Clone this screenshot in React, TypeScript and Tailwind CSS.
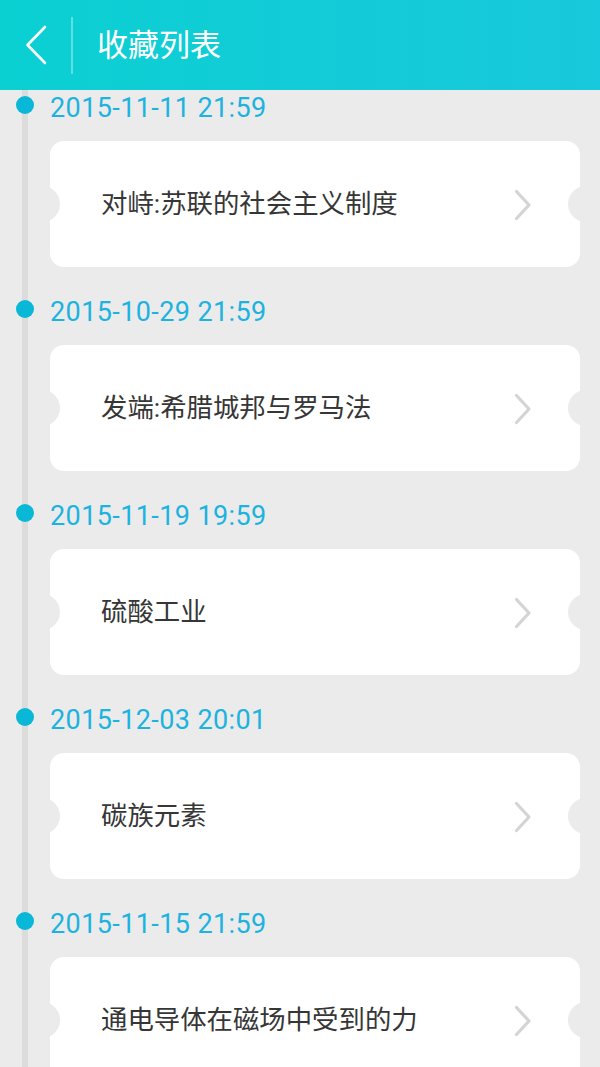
type Favorite = {
    date: string
    title: string
}

const favorites: Favorite[] = [
    { date: "2015-11-11 21:59", title: "对峙:苏联的社会主义制度" },
    { date: "2015-10-29 21:59", title: "发端:希腊城邦与罗马法" },
    { date: "2015-11-19 19:59", title: "硫酸工业" },
    { date: "2015-12-03 20:01", title: "碳族元素" },
    { date: "2015-11-15 21:59", title: "通电导体在磁场中受到的力" },
]

function Chevron() {
    return (
        <svg width="18" height="32" viewBox="0 0 18 32" fill="none">
            <path d="M2.5 2.5 L15 16 L2.5 29.5" stroke="#d4d4d4" strokeWidth="3.2" strokeLinecap="round" strokeLinejoin="round" />
        </svg>
    )
}

function BackIcon() {
    return (
        <svg width="24" height="42" viewBox="0 0 24 42" fill="none">
            <path d="M21 3 L3.5 21 L21 39" stroke="#ffffff" strokeWidth="2.6" strokeLinecap="round" strokeLinejoin="round" />
        </svg>
    )
}

function FavoriteItem({ item }: { item: Favorite }) {
    return (
        <div className="relative">
            <div className="h-[34px] flex items-center relative">
                <span className="absolute left-[-34px] top-[5px] w-[18px] h-[18px] rounded-full bg-[#08b8d6]"></span>
                <span className="text-[27px] leading-none tracking-[0.4px] text-[#1cb3e0]">{item.date}</span>
            </div>
            <div className="mt-[16px] relative h-[126px] bg-white rounded-[14px] flex items-center overflow-hidden">
                <span className="absolute left-[-26px] top-[45px] w-[36px] h-[36px] rounded-full bg-[#ebebeb]"></span>
                <span className="absolute right-[-24px] top-[45px] w-[36px] h-[36px] rounded-full bg-[#ebebeb]"></span>
                <p className="pl-[51px] flex-1 text-[26.4px] leading-none text-[#363636]">{item.title}</p>
                <div className="mr-[48px] mt-[2px]">
                    <Chevron />
                </div>
            </div>
        </div>
    )
}

export default function App() {
    return (
        <div className="w-[600px] h-[1067px] overflow-hidden bg-[#ebebeb] flex flex-col" style={{ fontFamily: 'Roboto, "Noto Sans CJK SC", sans-serif' }}>
            <header className="h-[90px] shrink-0 flex items-center bg-gradient-to-r from-[#0ad0d2] to-[#18c8dc]">
                <div className="w-[71px] flex pl-[24px]">
                    <BackIcon />
                </div>
                <div className="w-[2px] h-[57px] bg-[#5fe0e4]"></div>
                <h1 className="ml-[24px] text-[31px] text-white leading-none">收藏列表</h1>
            </header>
            <div className="relative flex-1">
                <div className="absolute left-[22px] top-0 bottom-0 w-[6px] bg-[#dcdcdc]"></div>
                <div className="pl-[50px] pr-[20px] pt-[1px] flex flex-col gap-[28px]">
                    {favorites.map((item, index) => (
                        <FavoriteItem key={index} item={item} />
                    ))}
                </div>
            </div>
        </div>
    )
}
